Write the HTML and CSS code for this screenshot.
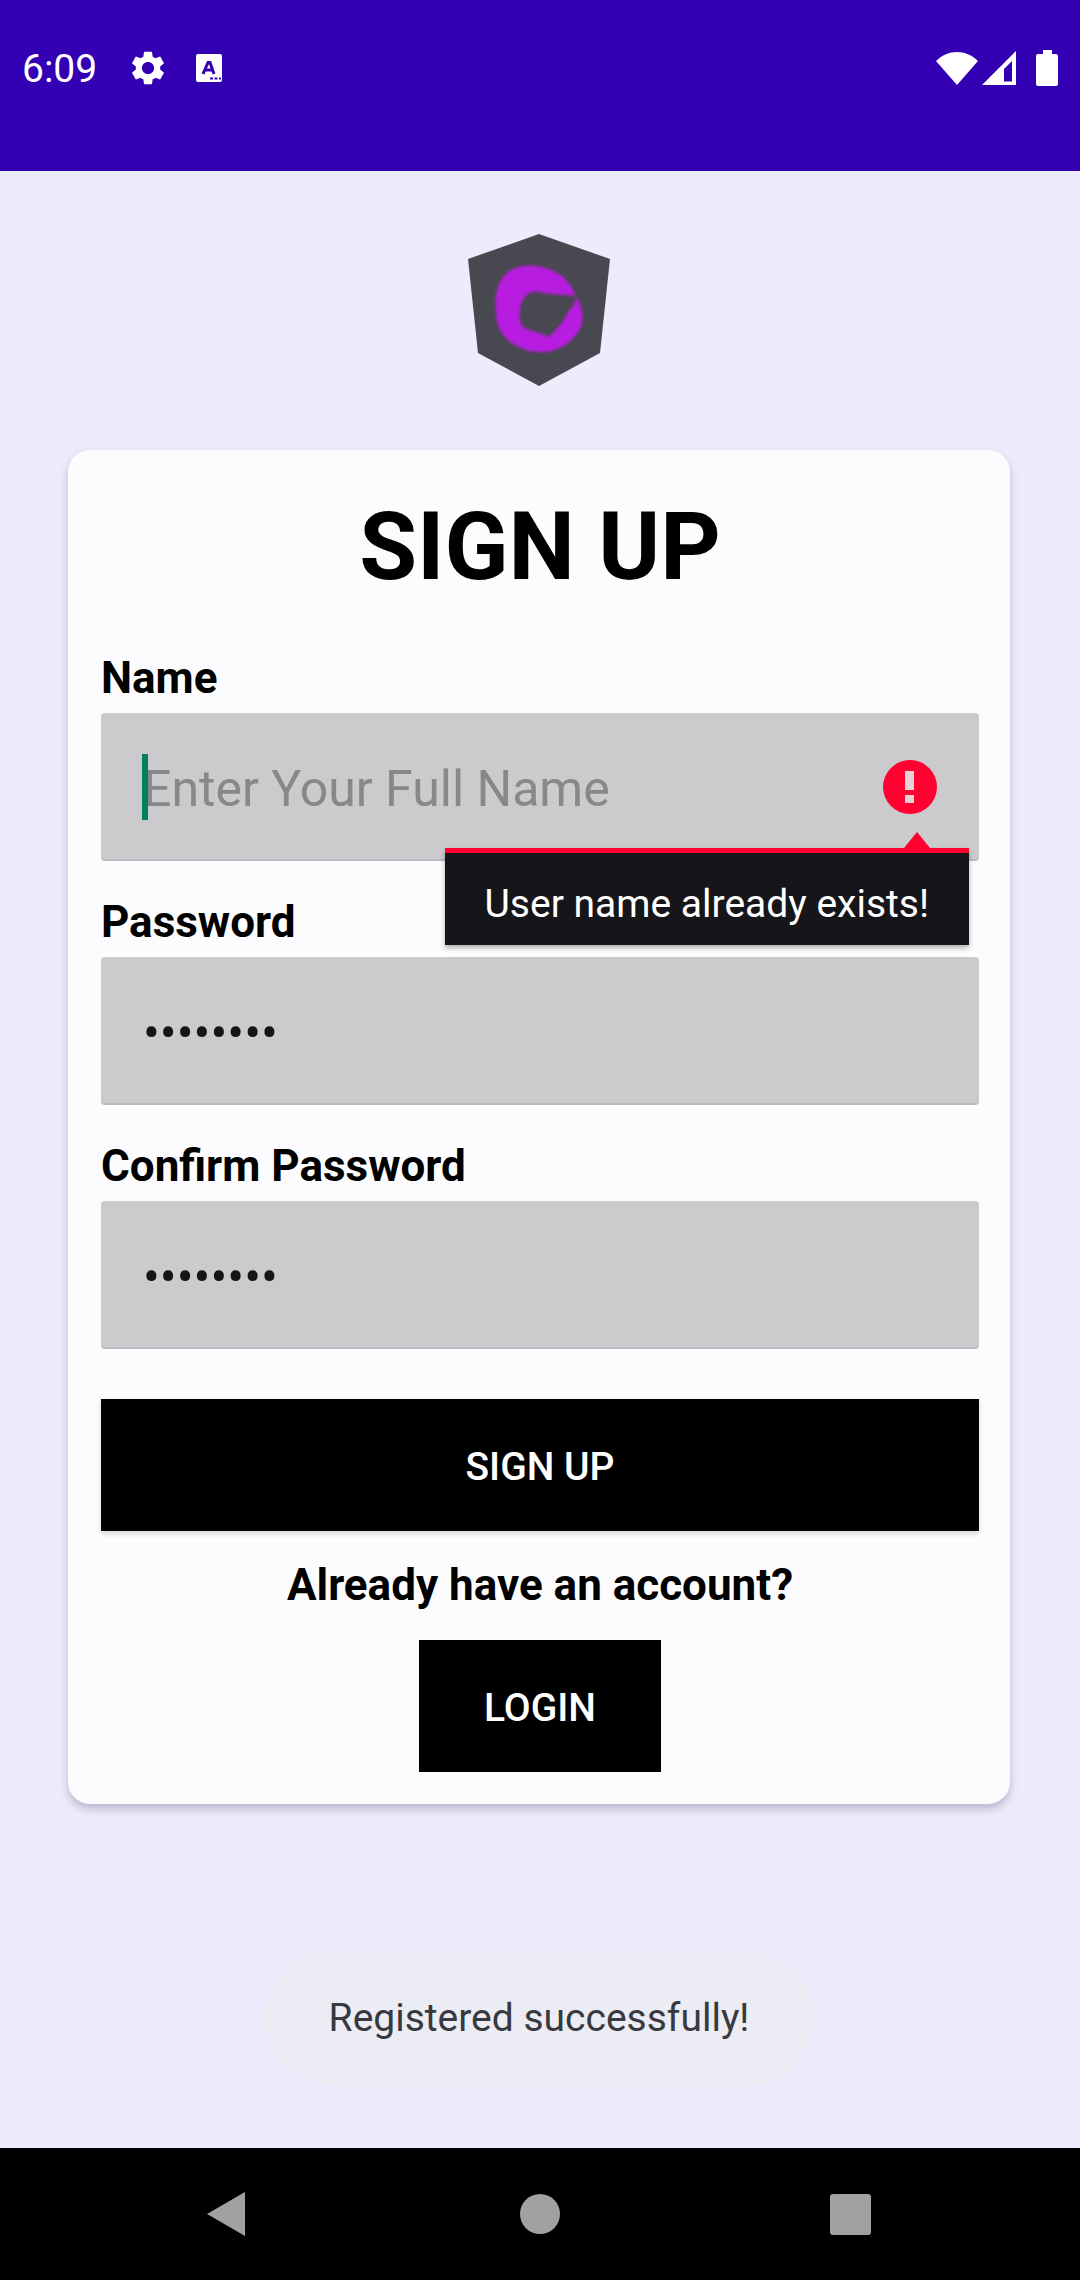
FILE: index.html
```html
<!DOCTYPE html>
<html lang="en">
<head>
<meta charset="utf-8">
<meta name="viewport" content="width=device-width, initial-scale=1">
<title>Sign up</title>
<link rel="stylesheet" href="styles.css">
</head>
<body>
<header class="status-bar">
  <div class="status-group status-left">
    <span class="clock">6:09</span>
    <svg class="icon-gear" viewBox="2 2 20 20" aria-hidden="true"><path fill="currentColor" d="M19.14 12.94c.04-.3.06-.61.06-.94 0-.32-.02-.64-.07-.94l2.03-1.58c.18-.14.23-.41.12-.61l-1.92-3.32c-.12-.22-.37-.29-.59-.22l-2.39.96c-.5-.38-1.03-.7-1.62-.94l-.36-2.54c-.04-.24-.24-.41-.48-.41h-3.84c-.24 0-.43.17-.47.41l-.36 2.54c-.59.24-1.13.57-1.62.94l-2.39-.96c-.22-.08-.47 0-.59.22L2.74 8.87c-.12.21-.08.47.12.61l2.03 1.58c-.05.3-.09.63-.09.94s.02.64.07.94l-2.03 1.58c-.18.14-.23.41-.12.61l1.92 3.32c.12.22.37.29.59.22l2.39-.96c.5.38 1.03.7 1.62.94l.36 2.54c.05.24.24.41.48.41h3.84c.24 0 .44-.17.47-.41l.36-2.54c.59-.24 1.13-.56 1.62-.94l2.39.96c.22.08.47 0 .59-.22l1.92-3.32c.12-.22.07-.47-.12-.61l-2.01-1.58zM12 15.6c-1.98 0-3.6-1.62-3.6-3.6s1.62-3.6 3.6-3.6 3.6 1.62 3.6 3.6-1.62 3.6-3.6 3.6z"/></svg>
    <svg class="icon-keyboard" viewBox="0 0 26 28" aria-hidden="true"><rect width="26" height="28" rx="2" fill="currentColor"/><path d="M7 20 12 8.500h2L18 20M9 16h7" fill="none" stroke="#3300b3" stroke-width="3"/><path d="M14 24.500h3M18.500 24.500h3M23 24.500h2" stroke="#3300b3" stroke-width="2"/></svg>
  </div>
  <div class="status-group">
    <svg class="icon-wifi" viewBox="0 0 42 34" aria-hidden="true"><path fill="currentColor" d="M0 10C12-2 30-2 42 10L21 34Z"/></svg>
    <svg class="icon-signal" viewBox="0 0 34 34" aria-hidden="true"><path fill="currentColor" fill-rule="evenodd" d="M34 0V34H0ZM30 10 22 18V30.500H30Z"/></svg>
    <svg class="icon-battery" viewBox="0 0 22 36" aria-hidden="true"><path fill="currentColor" d="M7 0h9v4h4q2 0 2 2v28q0 2-2 2H2q-2 0-2-2V6q0-2 2-2h5Z"/></svg>
  </div>
</header>

<main class="screen">
  <svg class="logo" viewBox="0 0 142 152" role="img" aria-label="App logo">
    <defs>
      <filter id="soft" x="-10%" y="-10%" width="120%" height="120%"><feGaussianBlur stdDeviation="1.500"/></filter>
    </defs>
    <path fill="#484850" d="M71 0 142 25 132 119 71 152 10 119 0 25Z"/>
    <path fill="#b81be0" fill-rule="evenodd" filter="url(#soft)" d="M41 37C54 28 78 30 94 42Q103 50 108 62C118 78 116 94 105 104C94 117 76 121 58 116C38 109 28 96 28 78C26 60 30 46 41 37ZM58 62C51 68 50 84 54 92C62 98 74 98 81 103C88 96 97 86 100 78Q108 70 108 62C96 60 82 61 72 58Q64 56 58 62Z"/>
  </svg>

  <form class="card">
    <h1 class="title">SIGN UP</h1>
    <div class="field">
      <label class="label" for="name">Name</label>
      <div class="control">
        <input class="input" id="name" type="text" placeholder="Enter Your Full Name" aria-describedby="name-error" autocomplete="off">
        <span class="caret"></span>
        <svg class="error-icon" viewBox="0 0 54 54" aria-hidden="true"><circle cx="27" cy="27" r="27" fill="#ff0030"/><path fill="#e6d2d4" d="M22 11h9v19h-9ZM22 35h9v8h-9Z"/></svg>
        <div class="error-popup" id="name-error" role="alert">User name already exists!</div>
      </div>
    </div>
    <div class="field">
      <label class="label" for="password">Password</label>
      <input class="input" id="password" type="password" value="abcd1234" autocomplete="off">
    </div>
    <div class="field">
      <label class="label" for="confirm">Confirm Password</label>
      <input class="input" id="confirm" type="password" value="abcd1234" autocomplete="off">
    </div>
    <button class="button button-wide" type="button">SIGN UP</button>
    <p class="prompt">Already have an account?</p>
    <button class="button button-login" type="button">LOGIN</button>
  </form>

  <div class="toast" role="status">Registered successfully!</div>
</main>

<nav class="nav-bar">
  <button class="nav-button" type="button" aria-label="Back"><svg class="nav-icon" viewBox="0 0 44 44"><path fill="currentColor" d="M37 0V44L-1 22Z"/></svg></button>
  <button class="nav-button" type="button" aria-label="Home"><svg class="nav-icon" viewBox="0 0 44 44"><circle cx="22" cy="22" r="20" fill="currentColor"/></svg></button>
  <button class="nav-button" type="button" aria-label="Recent apps"><svg class="nav-icon" viewBox="0 0 44 44"><rect x="2" y="2" width="41" height="41" rx="3" fill="currentColor"/></svg></button>
</nav>
</body>
</html>
```
FILE: styles.css
```css
* {
  box-sizing: border-box;
}

body {
  margin: 0;
  min-height: 100vh;
  display: flex;
  flex-direction: column;
  background: #ececfc;
  color: #000;
  font-family: Roboto, "Liberation Sans", sans-serif;
}

.status-bar {
  display: flex;
  justify-content: space-between;
  align-items: center;
  height: 171px;
  padding: 0 22px 36px;
  background: #3300b3;
  color: #fff;
}

.status-group {
  display: flex;
  align-items: center;
}

.clock {
  margin-right: 34px;
  padding-top: 2px;
  font-size: 39px;
  line-height: 44px;
}

.icon-gear {
  width: 34px;
  height: 36px;
  margin-right: 31px;
}

.icon-keyboard {
  width: 26px;
  height: 28px;
}

.icon-wifi {
  width: 42px;
  height: 34px;
}

.icon-signal {
  width: 34px;
  height: 34px;
  margin: 0 20px 0 4px;
}

.icon-battery {
  width: 22px;
  height: 36px;
}

.screen {
  flex: 1;
  display: flex;
  flex-direction: column;
  align-items: center;
  padding: 63px 70px 62px 68px;
}

.logo {
  width: 142px;
  height: 152px;
}

.card {
  width: 100%;
  margin-top: 64px;
  padding: 33px 31px 32px 33px;
  display: flex;
  flex-direction: column;
  align-items: center;
  background: #fcfcfe;
  border-radius: 22px;
  box-shadow: 0 5px 8px rgba(60, 50, 100, 0.28);
}

.title {
  margin: 0 0 33px;
  font-size: 94px;
  line-height: 128px;
  font-weight: 700;
}

.field {
  width: 100%;
  margin-bottom: 27px;
}

.label,
.prompt {
  margin: 0;
  font-size: 44px;
  line-height: 64px;
  font-weight: 700;
}

.label {
  display: block;
  padding: 4px 0 5px;
  line-height: 60px;
}

.control {
  position: relative;
}

.input {
  display: block;
  width: 100%;
  height: 148px;
  padding: 6px 42px 0;
  border: 0;
  border-bottom: 2px solid #b9b9bf;
  border-radius: 4px;
  background: #cbcbcd;
  color: #151515;
  font-family: inherit;
  font-size: 50px;
  outline: none;
}

.input::placeholder {
  color: #88888a;
  opacity: 1;
}

.caret {
  position: absolute;
  left: 41px;
  top: 41px;
  width: 6px;
  height: 66px;
  background: #00805f;
}

.error-icon {
  position: absolute;
  right: 42px;
  top: 47px;
  width: 54px;
  height: 54px;
}

.error-popup {
  position: absolute;
  right: 10px;
  top: 135px;
  padding: 12px 40px 2px;
  border-top: 5px solid #ff0030;
  background: #16161a;
  color: #fff;
  font-size: 39px;
  line-height: 78px;
  white-space: nowrap;
  box-shadow: 0 3px 5px rgba(0, 0, 0, 0.3);
}

.error-popup::before {
  content: "";
  position: absolute;
  right: 39px;
  bottom: 100%;
  margin-bottom: 5px;
  border: 13px solid transparent;
  border-top-width: 0;
  border-bottom: 16px solid #ff0030;
}

.button {
  height: 132px;
  padding: 4px 0 0;
  border: 0;
  background: #000;
  color: #fff;
  font-family: inherit;
  font-size: 39px;
  font-weight: 500;
}

.button-wide {
  width: 100%;
  margin: 23px 0 22px;
  box-shadow: 0 3px 5px rgba(0, 0, 0, 0.15);
}

.button-login {
  width: 242px;
  margin-top: 23px;
}

.toast {
  margin-top: auto;
  padding: 0 64px;
  border-radius: 68px;
  background: #ececf5;
  color: #38383f;
  font-size: 39px;
  line-height: 136px;
}

.nav-bar {
  display: flex;
  justify-content: center;
  align-items: center;
  gap: 266px;
  height: 132px;
  background: #000;
  color: #a1a1a3;
}

.nav-button {
  padding: 0;
  border: 0;
  background: none;
  color: inherit;
}

.nav-icon {
  display: block;
  width: 44px;
  height: 44px;
  overflow: visible;
}
```
